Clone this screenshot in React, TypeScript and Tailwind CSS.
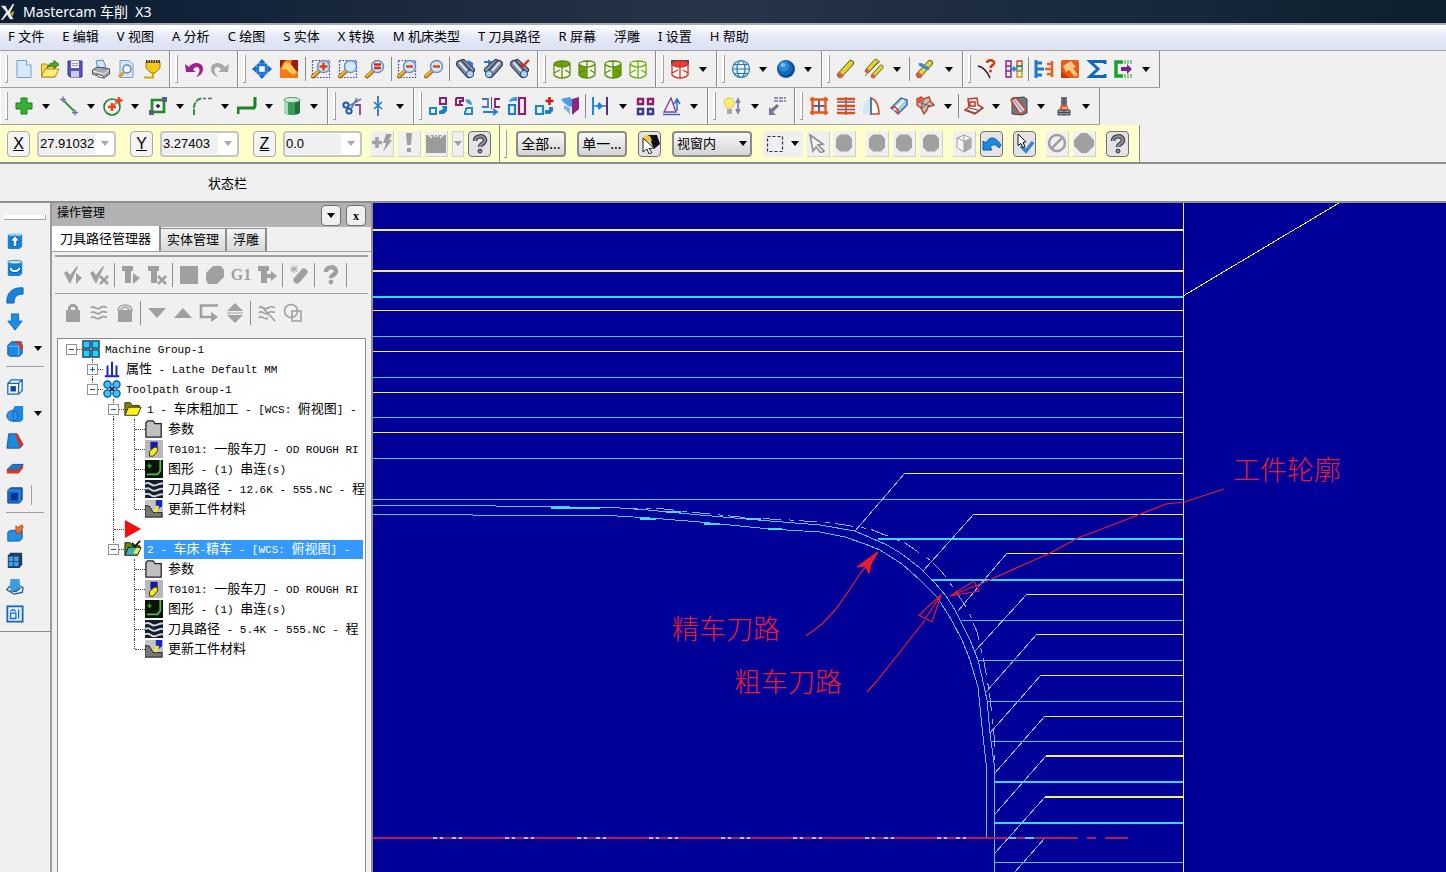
import { Fragment, useState } from "react";
import type { ReactNode } from "react";

const cjk = "font-['Noto_Sans','Noto_Sans_CJK_SC',sans-serif]";

const menus = [
  "F 文件", "E 编辑", "V 视图", "A 分析", "C 绘图", "S 实体", "X 转换",
  "M 机床类型", "T 刀具路径", "R 屏幕", "浮雕", "I 设置", "H 帮助",
];

/* ---------- icon parts ---------- */

const lens = (
  <>
    <path d="M2 17.500l6-5.500" stroke="#8a5a10" strokeWidth="4" strokeLinecap="round" />
    <path d="M2 17l6-5.500" stroke="#f0b030" strokeWidth="2.600" strokeLinecap="round" />
    <circle cx="12.500" cy="7.500" r="6" fill="#cfe9fb" stroke="#6b8fc0" strokeWidth="1.500" />
  </>
);
const marquee = <path d="M1.500 1.500h17v17h-17z" fill="none" stroke="#2a3c9c" strokeWidth="1.200" strokeDasharray="1.500 1.500" />;

const barrels = (
  <>
    <path d="M7 3l9 8" stroke="#2d3348" strokeWidth="6" strokeLinecap="round" />
    <path d="M7 3l9 8" stroke="#8a94ac" strokeWidth="4" strokeLinecap="round" />
    <path d="M4 5l9 10" stroke="#2d3348" strokeWidth="8" strokeLinecap="round" />
    <path d="M4 5l8 9" stroke="#7c86a0" strokeWidth="6" strokeLinecap="round" />
    <path d="M4 4l7 8" stroke="#dfe5f0" strokeWidth="2" strokeLinecap="round" />
    <circle cx="14" cy="15" r="3.600" fill="#a9d6f5" stroke="#2d4870" />
  </>
);

const box = (face: ReactNode, color: string) => (
  <>
    <path d="M2 5c0-4 16-4 16 0v11c0 4-16 4-16 0z" fill="#f6faee" />
    {face}
    <path d="M2 5c0-4 16-4 16 0v11c-2 2-5 3-8 3s-6-1-8-3zM2 5c2 2 5 3 8 3s6-1 8-3M10 8v11M10 2v6M2 14l6-3M18 14l-5-3" fill="none" stroke={color} strokeWidth="1.300" />
  </>
);
const boxTopFace = "M2 5c0-4 16-4 16 0-2 2-5 3-8 3S4 7 2 5z";

const hexagon = <path d="M6 1.500h8l4 4v9l-4 4H6l-4-4v-9z" fill="#a0a0a0" />;

const question = (fill: string, edge: string) => (
  <>
    <path d="M5 7c0-6 10-6 10-1 0 4-5 3.500-5 7" fill="none" stroke={edge} strokeWidth="4.500" />
    <path d="M5 7c0-6 10-6 10-1 0 4-5 3.500-5 7" fill="none" stroke={fill} strokeWidth="2.500" />
    <circle cx="10" cy="17" r="2" fill={fill} stroke={edge} />
  </>
);

const pencil = (
  <>
    <path d="M4 16L15 4" stroke="#6d5c10" strokeWidth="6" strokeLinecap="round" />
    <path d="M4 16L15 4" stroke="#e3d436" strokeWidth="4.200" strokeLinecap="round" />
    <path d="M2.500 14.500l4 3.500" stroke="#e0584a" strokeWidth="4" />
  </>
);

const checkMark = <path d="M1 8l3-2 3 4 7-9 1 1-4 8-4 9z" fill="#a0a0a0" />;
const tee = <path d="M1 1h11v5h-2v12H4V6H1z" fill="#a0a0a0" />;

const blueBlock = (
  <>
    <path d="M2 6l4-4h11l1 3v10l-3 3H4l-2-2z" fill="#1e88e0" stroke="#0a4c94" />
    <path d="M3 7h11v10M14 7l4-4" fill="none" stroke="#7cc4f8" />
  </>
);

const icons: Record<string, ReactNode> = {
  new: (
    <>
      <path d="M3 1.500h9.500L17 6v12.500H3z" fill="#d9ebfb" stroke="#6f9fcb" />
      <path d="M12.500 1.500V6H17" fill="#fff" stroke="#6f9fcb" />
    </>
  ),
  open: (
    <>
      <path d="M1.500 18V5h5l2 2H15v11z" fill="#f6d84a" stroke="#b08c1a" />
      <path d="M1.500 18L5 10h14l-4 8z" fill="#fdeb7c" stroke="#b08c1a" />
      <path d="M7 9c1-4 4-5 7-5V1.500l5 4-5 4V7c-3 0-5 0-7 2z" fill="#55ab2c" stroke="#2f7414" />
    </>
  ),
  save: (
    <>
      <path d="M3 2h14v16H5l-2-2z" fill="#5a57b8" stroke="#35338a" />
      <path d="M6 2h8v7H6z" fill="#f3f3fc" />
      <path d="M6 12h8v6H6z" fill="#c9cde8" />
      <path d="M7 4.500h6M7 6.500h6" stroke="#9a9ad0" />
    </>
  ),
  print: (
    <>
      <path d="M5 2l7-1 3 7-8 2z" fill="#cfe6fb" stroke="#6286ae" />
      <path d="M1.500 11l5-3 12 2v5l-6 4-11-4z" fill="#a8a8ae" stroke="#484850" />
      <path d="M2 12l11 3 5-4" fill="none" stroke="#f2f2f2" />
      <path d="M5 15l7 2 2 2-7-1z" fill="#fff" stroke="#666" />
    </>
  ),
  preview: (
    <>
      <path d="M4 1.500h9L17 5v13.500H4z" fill="#d4e8fa" stroke="#7b9fc6" />
      <circle cx="11" cy="10" r="4" fill="#eef8ff" stroke="#6488b4" strokeWidth="1.500" />
      <path d="M3 18l5-5" stroke="#dba030" strokeWidth="3" />
    </>
  ),
  funnel: (
    <>
      <path d="M4 3h14v6l-5 5h-4L4 9z" fill="#f6c81e" stroke="#a77b00" />
      <path d="M4 2.500h14" stroke="#4c3400" strokeWidth="3" strokeDasharray="1.500 1" />
      <path d="M11 13v5.500H2" fill="none" stroke="#d9a400" strokeWidth="2" />
    </>
  ),
  undo: <path d="M1 5l4 3c4-6 14-5 14 2 0 4-3 7-7 8 4-4 5-9 1-10-2 0-3 1-4 3l3 2H2z" fill="#a0208c" />,
  redo: <path d="M19 5l-4 3C11 2 1 3 1 10c0 4 3 7 7 8-4-4-5-9-1-10 2 0 3 1 4 3l-3 2h10z" fill="#a8a8a8" />,
  fit: (
    <>
      <path d="M10 0l4 4.500H6zM10 20l4-4.500H6zM0 10l4.500-4v8zM20 10l-4.500-4v8z" fill="#1760b8" />
      <path d="M6 6h8v8H6z" fill="#fff" stroke="#1e78d8" strokeWidth="2.500" />
      <path d="M10 3v2M10 15v2M3 10h2M15 10h2" stroke="#1e78d8" strokeWidth="3" />
    </>
  ),
  repaint: (
    <>
      <path d="M1 1h18v18H1z" fill="#a0180a" />
      <path d="M1 19V9l6-8h6l-2 8 8 4v6z" fill="#f47a16" />
      <path d="M5 3l6 1 7 9-4 3-7-6-4 1z" fill="#ffcb58" />
    </>
  ),
  zoomWindow: <>{marquee}{lens}<path d="M12.500 3.500v8M8.500 7.500h8" stroke="#e03c12" strokeWidth="2.500" /></>,
  zoomTarget: <>{marquee}{lens}</>,
  zoomSelected: <>{lens}<path d="M9 5.500h7M9 9h7" stroke="#e02818" strokeWidth="2.500" /></>,
  unzoomWindow: <>{marquee}{lens}<path d="M9 7.500h7" stroke="#e04818" strokeWidth="2.500" /></>,
  unzoom: <>{lens}<path d="M9 7.500h7" stroke="#e04818" strokeWidth="2.500" /></>,
  view1: <>{barrels}<path d="M12 1l5 3v5l-2-3-4-2z" fill="#2c75c8" /></>,
  view2: <><g transform="translate(20 0) scale(-1 1)">{barrels}</g><path d="M1 3h8M6 1v5" stroke="#2c75c8" strokeWidth="2" fill="none" /></>,
  view3: <>{barrels}<path d="M11 4l2 3 6-6" fill="none" stroke="#d42a1a" strokeWidth="2.200" /></>,
  boxTop: box(<path d={boxTopFace} fill="#6fa30c" />, "#5c8c0c"),
  boxFront: box(<path d="M2 5c2 2 5 3 8 3v11c-3 0-6-1-8-3z" fill="#6fa30c" />, "#5c8c0c"),
  boxSide: box(<path d="M10 8c3 0 6-1 8-3v11c-2 2-5 3-8 3z" fill="#6fa30c" />, "#5c8c0c"),
  boxIso: box(null, "#78a818"),
  boxRed: (
    <>
      <path d="M1 1h18v5H1z" fill="#4a4a4a" />
      {box(<path d={boxTopFace} fill="#e8403c" />, "#d4302c")}
    </>
  ),
  globe: (
    <g fill="none" stroke="#1e78b8" strokeWidth="1.200">
      <circle cx="10" cy="10" r="8.500" />
      <ellipse cx="10" cy="10" rx="4" ry="8.500" />
      <path d="M1.500 10h17M3 5.500h14M3 14.500h14" />
    </g>
  ),
  sphere: (
    <>
      <circle cx="10" cy="10" r="9" fill="#0c4c98" />
      <circle cx="9" cy="9" r="7.500" fill="#1868b8" />
      <circle cx="8" cy="7.500" r="5" fill="#2c8cdc" />
      <ellipse cx="7" cy="6" rx="2.500" ry="2" fill="#7cc0f0" />
    </>
  ),
  pencil,
  pencils: <><g transform="translate(0 -1) scale(.8)">{pencil}</g><g transform="translate(6 5) scale(.75)">{pencil}</g><path d="M1 17L16 2" stroke="#756920" /></>,
  pencilBlue: <>{pencil}<path d="M4 6c4-2 6 5 10 3" stroke="#3a86d0" strokeWidth="3.500" fill="none" /></>,
  analyze: (
    <>
      <path d="M1 7c5 1 9 5 12 12" stroke="#222" strokeWidth="1.500" />
      <path d="M10 4c0-4 8-3.500 7 .500-.500 2-3.500 2-3.500 4.500" fill="none" stroke="#c83c10" strokeWidth="2.500" />
      <circle cx="13.500" cy="12" r="1.500" fill="#c83c10" />
    </>
  ),
  distance: (
    <>
      <g fill="none" strokeWidth="1.400">
        <path d="M2 2h5v16H2zM2 7h5M2 12h5" stroke="#7a208c" />
        <path d="M13 2h5v5h-5z" stroke="#d04818" />
        <path d="M13 7h5v5h-5z" stroke="#2a8c48" />
        <path d="M13 12h5v6h-5z" stroke="#c0a020" />
      </g>
      <path d="M7 10l3-3 3 3-3 3z" fill="#2c88d8" />
    </>
  ),
  combs: (
    <>
      <path d="M2 1v18M2 4h6M2 10h8M2 16h6" stroke="#1e78d0" strokeWidth="3" fill="none" />
      <path d="M18 2v16M18 5h-5M18 15h-5M18 10h-7" stroke="#e8601c" strokeWidth="2.600" />
    </>
  ),
  hammer: (
    <>
      <rect x="1" y="1" width="18" height="18" rx="2" fill="#e85a10" />
      <path d="M1 12l9 7H1z" fill="#c03c08" />
      <path d="M3 7l8-5 5 6-3 1 5 7-3 2-6-7-3 2z" fill="#ffc78c" />
    </>
  ),
  sigma: <path d="M18 5V2.500H3l8 7.500-8 7.500h15V15" fill="none" stroke="#1266c0" strokeWidth="3" />,
  green: (
    <>
      <path d="M10 3H3v14h7" fill="none" stroke="#1ca02c" strokeWidth="3.500" />
      <path d="M12 1v4M15 1v4M18 1v4M12 15v4M15 15v4M18 15v4" stroke="#1ca02c" />
      <path d="M8 8h6V5l5 5-5 5v-3H8z" fill="#7a1c90" />
    </>
  ),

  plus: <path d="M7 2h6v5h5v6h-5v5H7v-5H2V7h5z" fill="#35b030" stroke="#1c7c20" />,
  line: (
    <>
      <path d="M5 5l10 10" stroke="#2c9440" strokeWidth="1.800" />
      <path d="M1 3.500h6M4 .500v6M13 16.500h6M16 13.500v6" stroke="#6872a0" strokeWidth="1.400" />
    </>
  ),
  circle: (
    <>
      <circle cx="9" cy="11" r="8" fill="none" stroke="#208038" strokeWidth="1.600" />
      <path d="M9 7v8M5 11h8M16 1v7M12.500 4.500h7" stroke="#e0481c" strokeWidth="2.500" />
      <path d="M10 10l6-6" stroke="#e0481c" strokeWidth="1.400" />
    </>
  ),
  rect: (
    <>
      <path d="M4 4h12v12H4z" fill="none" stroke="#1c8c24" strokeWidth="2.600" />
      <path d="M10 8v4M8 10h4" stroke="#405" strokeWidth="1.500" />
      <path d="M14 1h5v5h-5zM1 14h5v5H1z" fill="#55607a" />
    </>
  ),
  fillet: (
    <>
      <path d="M2 19v-7C2 7 5 3 10 2.500" fill="none" stroke="#2c9440" strokeWidth="2" strokeDasharray="6 1" />
      <path d="M11 2.500h3M16 2.500h4" stroke="#5c6480" strokeWidth="1.600" />
    </>
  ),
  spline: <path d="M1 18v-6h16l1-2V1" fill="none" stroke="#1c8028" strokeWidth="3" />,
  cylinder: (
    <>
      <path d="M2 4v12c0 4 16 4 16 0V4z" fill="#3c9c60" />
      <path d="M2 4v12c0 1 2 2 4 2.500V5z" fill="#a6dcb8" />
      <path d="M13 5v13.500c3 0 5-1 5-2.500V4z" fill="#1f7040" />
      <ellipse cx="10" cy="4" rx="8" ry="2.500" fill="#d2eed9" stroke="#4c9c68" />
    </>
  ),
  trim: (
    <>
      <circle cx="4" cy="9" r="2.600" fill="none" stroke="#1e5cb0" strokeWidth="2" />
      <circle cx="7" cy="15" r="2.600" fill="none" stroke="#1e5cb0" strokeWidth="2" />
      <path d="M7 10l12-7M9 13l6-11" stroke="#5a7cb0" strokeWidth="1.600" />
      <path d="M13 9h5v10" fill="none" stroke="#904088" strokeWidth="1.800" />
    </>
  ),
  breakPoint: (
    <>
      <path d="M10 0v6M10 14v6" stroke="#3858b0" strokeWidth="1.600" />
      <path d="M6 6l8 7M14 6l-8 7M10 5v10" stroke="#1e78c8" strokeWidth="1.600" />
    </>
  ),
  translate: (
    <>
      <path d="M12 2h6v6h-6z" fill="none" stroke="#8c1c6c" strokeWidth="2" />
      <path d="M2 12h6v6H2z" fill="none" stroke="#1c88c8" strokeWidth="2" />
      <path d="M11 18h5l3-3v-5h-5l1 3-4 2z" fill="#1c80d0" />
    </>
  ),
  rotate: (
    <>
      <path d="M2 2h7v3H6v4h3M2 2v7h4" fill="none" stroke="#8c1c6c" strokeWidth="2" />
      <path d="M12 12h6v6h-7v-3M12 12v3" fill="none" stroke="#1c88c8" strokeWidth="2" />
      <path d="M11 4c4-2 7 1 7 5l-4-1z" fill="#4c98d8" />
    </>
  ),
  mirror: (
    <>
      <path d="M1 3h6v8H1" fill="none" stroke="#4870b8" strokeWidth="1.800" />
      <path d="M19 3h-5v8h5" fill="none" stroke="#8c1c6c" strokeWidth="1.800" />
      <path d="M10.500 1v12" stroke="#555" />
      <path d="M2 16h13m-3-3l4 3-4 3" fill="none" stroke="#1c80d0" strokeWidth="1.800" />
    </>
  ),
  scale: (
    <>
      <path d="M2 9h6v9H2z" fill="none" stroke="#1c80c0" strokeWidth="2.200" />
      <path d="M12 2h6v16h-6z" fill="none" stroke="#8c1c6c" strokeWidth="2.200" />
      <path d="M2 6c1-4 4-5 8-5v4H6z" fill="#3c98dc" />
    </>
  ),
  offset: (
    <>
      <path d="M2 10h7v8H2z" fill="none" stroke="#1c88c8" strokeWidth="2.200" />
      <path d="M11 18h5l3-3v-4h-4v3h-4z" fill="#1c80d0" />
      <path d="M15.500 1v8M11.500 5h8" stroke="#d41818" strokeWidth="2.500" />
    </>
  ),
  project: (
    <>
      <path d="M1 3l9-2 3 4v5l-3 1-6-4z" fill="#48a0e0" />
      <path d="M12 3l7-2v12l-7 6z" fill="#8c2480" />
      <path d="M4 9l6 3v7c-2-3-4-5-6-6z" fill="#78b8e8" />
    </>
  ),
  span: (
    <>
      <path d="M3 1v18" stroke="#1c88d8" strokeWidth="2" />
      <path d="M17 1v18" stroke="#5c3070" strokeWidth="2" />
      <path d="M4 10h12" stroke="#1c80d0" strokeWidth="1.500" />
      <path d="M9 6l4 4-4 4-2-4z" fill="#1c80d0" />
    </>
  ),
  array: (
    <g fill="none" strokeWidth="2.400">
      <path d="M3 3h5v5H3zM13 3h5v5h-5z" stroke="#8c1c6c" />
      <path d="M13 13h5v5h-5zM3 13h5v5H3z" stroke="#3c3888" />
    </g>
  ),
  triangle: (
    <>
      <path d="M2 16h12L9 2z" fill="none" stroke="#8c3c98" strokeWidth="1.400" />
      <path d="M1 18.500h17M15 15V4m-3 4l3-5 3 5" fill="none" stroke="#2c70c0" strokeWidth="1.500" />
    </>
  ),
  bulb: (
    <>
      <path d="M7 2c7 0 6 7 3 10H5C1 8 1 2 7 2z" fill="#fbee78" stroke="#d8c84c" />
      <path d="M5 13h5v5H5z" fill="#a8a8b0" />
      <path d="M16 4v12m-2-9l2-4 2 4m-4 6l2 4 2-4" fill="none" stroke="#7c78a8" strokeWidth="1.600" />
    </>
  ),
  attributes: (
    <>
      <path d="M7 2h12M7 5h12" stroke="#74749c" strokeWidth="1.300" strokeDasharray="4 1" />
      <path d="M2 19v-8l2 2 6-5 2 2-6 6 3 3z" fill="#787498" />
    </>
  ),
  grid: (
    <>
      <path d="M10 3v14M3 10h14" stroke="#6c5c88" strokeWidth="2" />
      <path d="M1 3.500h18M1 16.500h18M3.500 1v18M16.500 1v18" stroke="#e8581c" strokeWidth="2.400" />
    </>
  ),
  ruled: (
    <>
      <path d="M10 1v18M1 6h18M1 13.500h18" stroke="#705c78" strokeWidth="1.400" />
      <path d="M1 3h18M1 10h18M1 17h18" stroke="#e04c18" strokeWidth="2.600" />
    </>
  ),
  revolve: (
    <>
      <path d="M1 18C1 8 4 3 9 2v16z" fill="#cfe8f4" />
      <path d="M9 2v16h8c0-8-3-14-8-16z" fill="#fff" stroke="#d04828" strokeWidth="1.600" />
      <path d="M9 1v18" stroke="#2c80b8" strokeWidth="1.500" />
    </>
  ),
  sweep: (
    <>
      <path d="M2 12L12 2l6 2v5l-9 9-4-4z" fill="#9ed0ec" stroke="#3c6888" strokeWidth="1.400" />
      <path d="M5 14L15 4" stroke="#fff" strokeWidth="2" />
      <path d="M2 12l4-1 3 3v4" fill="none" stroke="#e04020" strokeWidth="1.600" />
    </>
  ),
  net: (
    <>
      <path d="M2 3l4-2 3 2 5-2 2 5 3 3-6 2-1 3-3 4-3-6-4-3z" fill="#d8b8ac" stroke="#b84428" strokeWidth="1.400" />
      <path d="M3 6l12 4M9 3l-3 9M15 5L6 13" stroke="#5c5870" />
      <circle cx="5" cy="4" r="2.500" fill="#e85828" />
    </>
  ),
  surface: (
    <>
      <path d="M4 3l9-1 1 7 5 3-8 6-10-4 4-3z" fill="#f4ece8" stroke="#b83c28" strokeWidth="1.500" />
      <path d="M6 6h5v4H6z" fill="none" stroke="#b83c28" strokeWidth="1.500" />
      <path d="M3 14l8 3 7-5M5 12l9 2" fill="none" stroke="#555" />
    </>
  ),
  surface2: (
    <>
      <path d="M3 2l12-1 3 2v14l-5 2-10-1z" fill="#77757c" stroke="#454448" />
      <path d="M2 4l5-2 10 12-6 4z" fill="#e4d8dc" stroke="#c8442c" strokeWidth="1.400" />
      <path d="M5 4l9 12" stroke="#8ca4c8" strokeWidth="1.500" />
    </>
  ),
  tower: (
    <>
      <path d="M7 1h6v8H7z" fill="#66727c" />
      <path d="M7 9h6l2 6H5z" fill="#e8542c" />
      <path d="M4 14h12v5H4zM4 16.500h12M10 14v5M10 1v8" fill="#8c98a0" stroke="#444c54" />
      <path d="M8 12h5" stroke="#fff" />
    </>
  ),

  bolt: (
    <>
      <path d="M5 4v11M0 9.500h10" stroke="#a0a0a0" strokeWidth="3.600" />
      <path d="M14 1h6l-3 6h3l-9 12 3-9h-3z" fill="#a0a0a0" />
    </>
  ),
  exclaim: <path d="M7 0h6l-1 12H8zM8 15h4v4H8z" fill="#a0a0a0" />,
  block: (
    <>
      <path d="M0 2h20v18H0z" fill="#9c9c9c" />
      <path d="M2 1l4 4M18 1l-4 4M8 2l1 2M12 2l-1 2" stroke="#f0f0f0" strokeWidth="1.500" />
    </>
  ),
  help: question("#8c8c98", "#34343c"),
  pick: (
    <>
      <path d="M8 1h9l3 9-6 5z" fill="#111" />
      <path d="M1 8l4-7 5 1 2 5z" fill="#f8c838" />
      <path d="M3 4l11 10-5 .500 3 4-3 1.500-2-5-4 3z" fill="#fff" stroke="#222" />
    </>
  ),
  dashed: <path d="M2.500 2.500h15v15h-15z" fill="none" stroke="#303048" strokeWidth="1.200" strokeDasharray="3 2" />,
  cursor: <path d="M2 2l13 9-5 1 6 6-3 2-5-6-3 4z" fill="#f4f4f4" stroke="#8c8c8c" strokeWidth="1.600" />,
  hexagon,
  disc: <path d="M7 0h6l7 7v6l-7 7H7l-7-7V7z" fill="#a0a0a0" />,
  solidGrey: (
    <>
      <path d="M3 5l7-3 7 3v10l-7 4-7-4z" fill="#f4f4f4" stroke="#a0a0a0" />
      <path d="M10 8l7-3v10l-7 4z" fill="#a8a8a8" />
      <path d="M3 5l7 3v11M10 2v6" fill="none" stroke="#a0a0a0" />
    </>
  ),
  back: <path d="M1 16V7l3 2c4-7 9-7 15 2l-2 3c-3-4-6-4-9-1l2 3z" fill="#1c88e0" stroke="#0c58a8" />,
  validate: (
    <>
      <path d="M6 12l5 5 7-9" fill="none" stroke="#3c80d0" strokeWidth="3.500" />
      <path d="M3 0l8 8-3 .500 2 4-2 1-2-4-3 2z" fill="#fff" stroke="#111" />
    </>
  ),
  forbid: (
    <g fill="none" stroke="#a0a0a0">
      <circle cx="10" cy="10" r="8" strokeWidth="2.500" />
      <path d="M5 15L15 5" strokeWidth="2.500" />
    </g>
  ),

  checkAdd: <>{checkMark}<path d="M13 8l6 5-6 6z" fill="#a0a0a0" /></>,
  checkDel: <>{checkMark}<path d="M11 11l8 8M19 11l-8 8" stroke="#a0a0a0" strokeWidth="2.500" /></>,
  teeAdd: <>{tee}<path d="M12 8l7 5-7 6z" fill="#a0a0a0" /></>,
  teeDel: <>{tee}<path d="M11 11l8 8M19 11l-8 8" stroke="#a0a0a0" strokeWidth="2.500" /></>,
  square: <path d="M1 1h18v18H1z" fill="#a0a0a0" />,
  blob: <path d="M8 1h8l3 4v7l-7 7H3l-2-4V8z" fill="#a0a0a0" />,
  teeArrow: <>{tee}<path d="M9 9h5V6l6 5-6 5v-3H9z" fill="#a0a0a0" /></>,
  drill: (
    <>
      <path d="M8 15l7-8" stroke="#a0a0a0" strokeWidth="7" strokeLinecap="round" />
      <path d="M2 1l6 6M8 1L2 7M5 0v8M1 4h8" stroke="#a0a0a0" />
    </>
  ),
  helpGrey: question("#a0a0a0", "#a0a0a0"),
  lock: <path d="M5 7V4l3-3h4l3 3v3h2v12H3V7zM8 7h4V4H8z" fill="#a0a0a0" fillRule="evenodd" />,
  waves: <path d="M2 5c3-4 5 3 9 0s5 0 7-1M2 10c3-4 5 3 9 0s5 0 7-1M2 15c3-4 5 3 9 0s5 0 7-1" fill="none" stroke="#a0a0a0" strokeWidth="1.800" />,
  lockAll: (
    <>
      <path d="M3 7h14v12H3z" fill="#a0a0a0" />
      <path d="M3 8c0-8 14-8 14 0M6 8c0-5 8-5 8 0" fill="none" stroke="#a0a0a0" strokeWidth="1.600" />
    </>
  ),
  down: <path d="M1 5h18l-9 10z" fill="#a0a0a0" />,
  up: <path d="M1 15h18L10 5z" fill="#a0a0a0" />,
  insert: (
    <>
      <path d="M19 2.500H2V14h11" fill="none" stroke="#a0a0a0" strokeWidth="2.600" />
      <path d="M12 9l7 5-7 5z" fill="#a0a0a0" />
    </>
  ),
  upDown: <path d="M2 8l8-8 8 8zM2 12h16l-8 8zM2 9.500h16v1H2z" fill="#a0a0a0" />,
  wavesOff: <path d="M2 5c3-4 5 3 9 0s5 0 7-1M2 10c3-4 5 3 9 0s5 0 7-1M2 15c3-4 5 3 9 0M4 3l14 15" fill="none" stroke="#a0a0a0" strokeWidth="1.600" />,
  ghost: (
    <g fill="none" stroke="#a0a0a0" strokeWidth="1.600">
      <circle cx="8" cy="8" r="6.500" />
      <path d="M9 8h9v10H9z" />
    </g>
  ),

  extrude: (
    <>
      <path d="M2 3h16v13l-3 3H3l-1-2z" fill="#1582dc" />
      <ellipse cx="10" cy="3" rx="8" ry="1.500" fill="#8ad0f8" />
      <path d="M10 4l5 6h-3v6H8v-6H5z" fill="#fff" stroke="#0a4c94" />
    </>
  ),
  solidRevolve: (
    <>
      <path d="M2 3h16v13l-3 3H3l-1-2z" fill="#1582dc" />
      <ellipse cx="10" cy="3.500" rx="8" ry="2" fill="#bfe6fb" stroke="#2c78b8" />
      <path d="M5 10c1 5 9 4 10 0" fill="none" stroke="#0a4c94" strokeWidth="4" />
      <path d="M5 10c1 5 9 4 10 0" fill="none" stroke="#fff" strokeWidth="2.200" />
    </>
  ),
  solidSweep: <path d="M1 19C0 8 7 1 19 2v7c-7 0-10 3-10 10z" fill="#1582dc" stroke="#0c62b4" />,
  loft: <path d="M6 1h8v8h4l-8 10L2 9h4z" fill="#1e8ce4" stroke="#1268b4" />,
  solidFillet: <>{blueBlock}<path d="M11 1c6 0 8 5 8 9l-3 1c0-4-2-7-6-8z" fill="#e0341c" /></>,
  shell: (
    <>
      <path d="M2 6l4-4h12v12l-4 4H2zM2 6h12v12M14 6l4-4" fill="#eaf5fd" stroke="#1868b0" strokeWidth="1.400" />
      <path d="M5 9h6v6H5z" fill="#104c94" />
    </>
  ),
  boolean: (
    <>
      <path d="M10 1h9v15l-3 3h-8V4z" fill="#1e88e0" />
      <circle cx="7" cy="12" r="6" fill="#2c94e8" stroke="#0c58a8" />
      <path d="M8 6v12" stroke="#0c58a8" />
    </>
  ),
  draft: (
    <>
      <path d="M3 2h9l7 12-4 4H1z" fill="#1e88e0" stroke="#0c58a8" />
      <path d="M10 1l3 1 6 12-3 4z" fill="#dc3018" />
    </>
  ),
  trimSolid: (
    <>
      <path d="M1 12l6-6h12l-5 6z" fill="#1e78d0" stroke="#0c4890" />
      <path d="M1 12h13l5-6v4l-5 6H1z" fill="#e0341c" />
    </>
  ),
  thicken: (
    <>
      <path d="M2 5l3-3h13v13l-3 4H2z" fill="#1670cc" stroke="#0a3c7c" />
      <path d="M5 8h8v8H5z" fill="#0a2c98" />
      <path d="M2 5h13v13" fill="none" stroke="#3c90e0" />
    </>
  ),
  removeFace: (
    <>
      <path d="M2 9l3-2h13v9l-3 3H2z" fill="#2490e8" stroke="#0c58a8" />
      <path d="M18 1l-5 3-2-2v8h7l-2-2 3-4z" fill="#f07828" stroke="#b8400c" />
    </>
  ),
  windowSolid: (
    <>
      <path d="M2 5l3-3h13v13l-3 4H2z" fill="#223c5c" />
      <path d="M3 6h5v5H3zM9 6h5v5H9zM3 12h5v5H3zM9 12h5v5H9z" fill="#3ca0ec" />
    </>
  ),
  findFeature: (
    <>
      <path d="M5 1h10l1 11-6 3-6-3z" fill="#3c9ce4" />
      <path d="M4 9l-3 4 8 5 9-2 1-5-3-2M5 14l6 1 5-4" fill="none" stroke="#1e5890" strokeWidth="1.400" />
    </>
  ),
  layout: (
    <>
      <rect x="1.500" y="1.500" width="17" height="17" fill="#dff0fc" stroke="#1868b8" strokeWidth="2" />
      <path d="M5 9h6v6H5zM14 5v10M5 7l3-2 3 2" fill="none" stroke="#1868b8" strokeWidth="1.400" />
    </>
  ),

  machine: <path d="M1 1h8v8H1zM11 1h8v8h-8zM1 11h8v8H1zM11 11h8v8h-8z" fill="#20d0f8" stroke="#10305c" strokeWidth="1.400" />,
  bars: <path d="M2 18h16M5 6v12M10 2v16M15 6v12" stroke="#1828c0" strokeWidth="2.200" fill="none" />,
  group: (
    <>
      <path d="M5 5l10 10M15 5L5 15" stroke="#10305c" strokeWidth="2" />
      <g fill="#30c8f8" stroke="#10488c" strokeWidth="1.400">
        <circle cx="5" cy="5" r="4" /><circle cx="15" cy="5" r="4" /><circle cx="5" cy="15" r="4" /><circle cx="15" cy="15" r="4" />
      </g>
    </>
  ),
  folder: (
    <>
      <path d="M1 17V3h6l2 3h8v4" fill="#8c7c08" stroke="#2c2800" />
      <path d="M1 17l4-9h14l-4 9z" fill="#fbf020" stroke="#2c2800" />
    </>
  ),
  folderSel: (
    <>
      <path d="M1 17V3h6l2 3h8v4" fill="#6c8428" stroke="#181800" />
      <path d="M1 17l4-9h14l-4 9z" fill="#38b0b8" stroke="#181800" />
      <path d="M10 15l4-6h4l-3 6z" fill="#f8f048" />
      <path d="M9 3l3 4 6-6" fill="none" stroke="#181800" strokeWidth="2" />
    </>
  ),
  params: <path d="M1 19V3l2-2h6l2 3h7v15z" fill="#c0c0c0" stroke="#202020" strokeWidth="1.400" />,
  tool: (
    <>
      <path d="M0 0h20v20H0z" fill="#b8b8b8" />
      <path d="M6 2h8v8l-4 3-4-3z" fill="#1018b0" />
      <path d="M5 18v-5l5-5h4v4l-5 6z" fill="#f8e820" stroke="#303000" />
    </>
  ),
  geometry: (
    <>
      <path d="M0 0h20v20H0z" fill="#081408" />
      <path d="M17 0v12l-3 4H2" fill="none" stroke="#58b848" strokeWidth="2" />
      <path d="M5 4v5M2.500 6.500h5" stroke="#38a838" strokeWidth="1.600" />
    </>
  ),
  toolpath: (
    <>
      <path d="M0 0h20v20H0z" fill="#181c24" />
      <path d="M0 4c6-3 6 3 11 2s5-3 9-2M0 10c6-3 6 3 11 2s5-3 9-2M0 16c6-3 6 3 11 2s5-3 9-2" fill="none" stroke="#c8d8e4" strokeWidth="2.200" />
    </>
  ),
  stock: (
    <>
      <path d="M0 0h20v20H0z" fill="#c4c4c4" />
      <path d="M0 6l5 1 4 7h10v5H0z" fill="#787878" stroke="#181818" />
      <path d="M12 0h7v7l-4 3-3-2z" fill="#1828c0" />
      <path d="M12 6l4 1-3 7-3-1z" fill="#f8e820" />
    </>
  ),
  play: <path d="M1 0l18 10L1 20z" fill="#f01010" />,
};

function Icon({ name, className = "size-5" }: { name: string; className?: string }) {
  return (
    <svg viewBox="0 0 20 20" className={`${className} shrink-0`} fill="none" aria-hidden="true">
      {icons[name]}
    </svg>
  );
}

function Caret({ className = "text-black" }: { className?: string }) {
  return (
    <svg viewBox="0 0 8 5" className={`w-2 h-[5px] shrink-0 ${className}`} aria-hidden="true">
      <path d="M0 0h8L4 5z" fill="currentColor" />
    </svg>
  );
}

/* "|" is a separator, "v" a drop-down arrow, anything else an icon button */
function Items({ items }: { items: string[] }) {
  return (
    <>
      {items.map((item, i) => {
        if (item === "|") return <span key={i} className="w-px h-6 bg-[#8a8a8a]" />;
        if (item === "v") {
          return (
            <button key={i} className="w-4 h-6 flex items-center justify-center" aria-label={`${items[i - 1]} options`}>
              <Caret />
            </button>
          );
        }
        return (
          <button key={i} className="w-6 h-6 flex items-center justify-center hover:bg-white" aria-label={item}>
            <Icon name={item} />
          </button>
        );
      })}
    </>
  );
}

function Grip() {
  return <span className="w-[3px] h-7 mx-1 shrink-0 bg-white border-r border-b border-[#a0a0a0]" />;
}

function Group({ width, items }: { width: string; items: string[] }) {
  return (
    <div className={`${width} h-9 flex items-center border-r border-r-[#8c8c8c] border-l border-l-white shrink-0`}>
      <Grip />
      <div className="flex-1 flex items-center justify-between pr-[5px]">
        <Items items={items} />
      </div>
    </div>
  );
}

const rowOne = [
  { width: "w-[170px]", items: ["new", "open", "save", "print", "preview", "funnel"] },
  { width: "w-[68px]", items: ["undo", "redo"] },
  { width: "w-[300px]", items: ["fit", "repaint", "|", "zoomWindow", "zoomTarget", "zoomSelected", "|", "unzoomWindow", "unzoom", "|", "view1", "view2", "view3"] },
  { width: "w-[118px]", items: ["boxTop", "boxFront", "boxSide", "boxIso"] },
  { width: "w-[61px]", items: ["boxRed", "v"] },
  { width: "w-[105px]", items: ["globe", "v", "sphere", "v"] },
  { width: "w-[141px]", items: ["pencil", "pencils", "v", "|", "pencilBlue", "v"] },
  { width: "w-[197px]", items: ["analyze", "distance", "|", "combs", "hammer", "sigma", "green", "v"] },
];

const rowTwo = [
  { width: "w-[328px]", items: ["plus", "v", "line", "v", "circle", "v", "rect", "v", "fillet", "v", "spline", "v", "cylinder", "v"] },
  { width: "w-[86px]", items: ["trim", "breakPoint", "v"] },
  { width: "w-[294px]", items: ["translate", "rotate", "mirror", "scale", "offset", "project", "|", "span", "v", "array", "triangle", "v"] },
  { width: "w-[87px]", items: ["bulb", "v", "attributes"] },
  { width: "w-[305px]", items: ["grid", "ruled", "revolve", "sweep", "net", "v", "|", "surface", "v", "surface2", "v", "tower", "v"] },
];

function Coordinate({ axis, initial }: { axis: string; initial: string }) {
  const [value, setValue] = useState(initial);
  return (
    <div className="flex items-center gap-[7px]">
      <button className="w-[23px] h-[26px] rounded-sm border border-[#a8a8a8] bg-[#f4f4f4] font-['Liberation_Sans',sans-serif] text-base leading-none underline">
        {axis}
      </button>
      <div className="w-[79px] h-[26px] flex items-center border-2 border-[#c4c4c4] rounded-sm bg-white">
        <input
          aria-label={`${axis} coordinate`}
          value={value}
          onChange={(e) => setValue(e.target.value)}
          className="w-14 h-5 pl-px bg-[#f0f0f0] font-['Liberation_Sans',sans-serif] text-[13px] outline-none"
        />
        <button className="flex-1 flex justify-center" aria-label={`${axis} history`}>
          <Caret className="text-[#a8a8a8]" />
        </button>
      </div>
    </div>
  );
}

function FlatButton({ name, raised = false }: { name: string; raised?: boolean }) {
  return (
    <button
      aria-label={name}
      className={`w-[23px] h-[26px] flex items-center justify-center ${
        raised ? "rounded-sm border border-[#70707c] bg-[#e4e4e4]" : "bg-[#f0f0f0] border-r border-b border-[#d0d0d0]"
      }`}
    >
      <Icon name={name} />
    </button>
  );
}

function TextButton({ children }: { children: ReactNode }) {
  return (
    <button className="w-[50px] h-[26px] rounded-sm border-2 border-[#8c8c8c] bg-linear-to-b from-[#f8f8f8] to-[#d4d4d4] text-sm leading-none whitespace-nowrap">
      {children}
    </button>
  );
}

function CoordinateBar() {
  return (
    <div className="flex border-b-2 border-[#8c8c8c] h-[39px]">
      <div className="flex items-center bg-[#ffffcc] border-r border-[#8c8c8c] shrink-0">
        <div className="w-[500px] h-full flex items-center pl-[7px] border-r border-[#8c8c8c]">
          <div className="flex gap-[14px]">
            <Coordinate axis="X" initial="27.91032" />
            <Coordinate axis="Y" initial="3.27403" />
            <Coordinate axis="Z" initial="0.0" />
          </div>
          <div className="flex gap-1 ml-[9px]">
            <FlatButton name="bolt" />
            <FlatButton name="exclaim" />
            <FlatButton name="block" />
            <button className="w-3 h-[26px] flex items-center justify-center bg-[#f0f0f0] border border-[#d0d0d0]" aria-label="block options">
              <Caret className="text-[#a0a0a0]" />
            </button>
            <FlatButton name="help" raised />
          </div>
        </div>
        <Grip />
        <div className="flex items-center gap-[11px] ml-[5px]">
          <TextButton>全部...</TextButton>
          <TextButton>单一...</TextButton>
          <FlatButton name="pick" raised />
          <div className="relative">
            <select
              aria-label="选择方式"
              className="w-20 h-[26px] pl-[3px] rounded-sm border-2 border-[#8c8c8c] bg-linear-to-b from-[#f8f8f8] to-[#d4d4d4] text-[13px] leading-none appearance-none"
            >
              <option>视窗内</option>
            </select>
            <span className="absolute right-[5px] top-[11px] pointer-events-none">
              <Caret />
            </span>
          </div>
          <div className="flex bg-[#f0f0f0] h-[26px] items-center">
            <Items items={["dashed", "v"]} />
          </div>
        </div>
        <div className="flex items-center gap-[10px] ml-1 pr-[10px]">
          <div className="flex gap-[3px]">
            <FlatButton name="cursor" />
            <FlatButton name="hexagon" />
          </div>
          <div className="flex gap-1">
            <FlatButton name="hexagon" />
            <FlatButton name="hexagon" />
            <FlatButton name="hexagon" />
          </div>
          <div className="flex gap-1">
            <FlatButton name="solidGrey" />
            <FlatButton name="back" raised />
          </div>
          <FlatButton name="validate" raised />
          <div className="flex gap-1">
            <FlatButton name="forbid" />
            <FlatButton name="disc" />
          </div>
          <FlatButton name="help" raised />
        </div>
      </div>
    </div>
  );
}

/* ---------- solids toolbar on the left edge ---------- */

const solids = [
  "extrude", "solidRevolve", "solidSweep", "loft", "solidFillet+", "-",
  "shell", "boolean+", "draft", "trimSolid", "thicken", "-",
  "removeFace", "windowSolid", "findFeature", "layout",
];

function SolidsBar() {
  return (
    <aside className="w-[52px] shrink-0 border-r-2 border-[#9a9a9a]">
      <div className="border-b border-[#8c8c8c] pt-3 pb-1">
        <div className="h-[5px] ml-1 mr-1 mb-[7px] bg-white border-b border-r border-[#a0a0a0]" />
        {solids.map((item, i) => {
          if (item === "-") return <div key={i} className="h-px mt-1 mb-[6px] mx-[6px] bg-[#a0a0a0]" />;
          const name = item.replace("+", "");
          return (
            <div key={i} className="flex items-center h-[27px] pl-[6px]">
              <button aria-label={name}>
                <Icon name={name} className="size-[18px]" />
              </button>
              {item.endsWith("+") && (
                <button className="ml-[10px]" aria-label={`${name} options`}>
                  <Caret />
                </button>
              )}
              {name === "thicken" && <span className="ml-[7px] w-px h-5 bg-[#a0a0a0]" />}
            </div>
          );
        })}
      </div>
    </aside>
  );
}

/* ---------- operations tree ---------- */

type Row = { level: number; icon: string; text: string; box?: string; selected?: boolean };

const tree: Row[] = [
  { level: 0, icon: "machine", text: "Machine Group-1", box: "-" },
  { level: 1, icon: "bars", text: "属性 - Lathe Default MM", box: "+" },
  { level: 1, icon: "group", text: "Toolpath Group-1", box: "-" },
  { level: 2, icon: "folder", text: "1 - 车床粗加工 - [WCS: 俯视图] -", box: "-" },
  { level: 3, icon: "params", text: "参数" },
  { level: 3, icon: "tool", text: "T0101: 一般车刀 - OD ROUGH RI" },
  { level: 3, icon: "geometry", text: "图形 - (1) 串连(s)" },
  { level: 3, icon: "toolpath", text: "刀具路径 - 12.6K - 555.NC - 程" },
  { level: 3, icon: "stock", text: "更新工件材料" },
  { level: 2, icon: "play", text: "" },
  { level: 2, icon: "folderSel", text: "2 - 车床-精车 - [WCS: 俯视图] -", box: "-", selected: true },
  { level: 3, icon: "params", text: "参数" },
  { level: 3, icon: "tool", text: "T0101: 一般车刀 - OD ROUGH RI" },
  { level: 3, icon: "geometry", text: "图形 - (1) 串连(s)" },
  { level: 3, icon: "toolpath", text: "刀具路径 - 5.4K - 555.NC - 程" },
  { level: 3, icon: "stock", text: "更新工件材料" },
];

/* Latin runs are set smaller so that two of them span one Chinese character */
function TreeText({ text }: { text: string }) {
  return (
    <>
      {text.split(/([\u4e00-\u9fff]+)/).map((part, i) =>
        i % 2 ? <Fragment key={i}>{part}</Fragment> : <span key={i} className="text-[11px]">{part}</span>
      )}
    </>
  );
}

function TreeRow({ row, index }: { row: Row; index: number }) {
  // a guide runs down column n while a later row still hangs off it
  const guide = (column: number) => {
    const rest = tree.slice(index + 1);
    const end = rest.findIndex((r) => r.level < column);
    const scope = end < 0 ? rest : rest.slice(0, end);
    return scope.some((r) => r.level === column);
  };
  return (
    <li className="flex items-center h-5">
      {[0, 1, 2, 3].slice(0, row.level + 1).map((column) => {
        const own = column === row.level;
        return (
          <span key={column} className="w-[21px] h-5 shrink-0 flex flex-col items-center relative">
            {column > 0 && (own || guide(column)) && (
              <span className={`border-l border-dotted border-[#404040] ${guide(column) ? "h-5" : "h-[10px]"}`} />
            )}
            {own && <span className="absolute left-[11px] top-[10px] w-[10px] border-t border-dotted border-[#404040]" />}
            {own && row.box && (
              <button className="absolute left-[5px] top-[5px] size-[11px] bg-white border border-[#909090]" aria-label={row.box === "-" ? "collapse" : "expand"}>
                <svg viewBox="0 0 9 9" className="block size-[9px]">
                  <path d={row.box === "-" ? "M2 4.500h5" : "M2 4.500h5M4.500 2v5"} stroke="#3050a0" />
                </svg>
              </button>
            )}
          </span>
        );
      })}
      <Icon name={row.icon} className="size-[18px]" />
      <span
        className={`ml-[2px] pl-[3px] h-[19px] leading-[19px] text-[13px] whitespace-pre ${
          row.selected ? "flex-1 bg-[#3399ff] text-white mr-[2px]" : ""
        }`}
      >
        <TreeText text={row.text} />
      </span>
    </li>
  );
}

const panelTabs = ["刀具路径管理器", "实体管理", "浮雕"];
const panelRowOne = ["checkAdd", "checkDel", "|", "teeAdd", "teeDel", "|", "square", "blob", "G1", "teeArrow", "|", "drill", "|", "helpGrey", "|"];
const panelRowTwo = ["lock", "waves", "lockAll", "|", "down", "up", "insert", "upDown", "|", "wavesOff", "ghost"];

function PanelTools({ items }: { items: string[] }) {
  return (
    <div className="flex items-center h-9 pl-[5px]">
      {items.map((item, i) =>
        item === "|" ? (
          <span key={i} className="w-px h-6 ml-[2px] mr-[3px] bg-[#8c8c8c]" />
        ) : (
          <button key={i} aria-label={item} className="w-[26px] h-6 flex items-center justify-center">
            {item === "G1" ? (
              <span className="font-['Liberation_Serif',serif] font-bold text-base text-[#a0a0a0]">G1</span>
            ) : (
              <Icon name={item} />
            )}
          </button>
        )
      )}
    </div>
  );
}

function OperationsPanel() {
  const [tab, setTab] = useState(0);
  return (
    <section className="w-[321px] shrink-0 flex flex-col border-r-2 border-[#909090]">
      <header className="h-6 shrink-0 bg-[#b2b2b2] flex items-start px-[5px] gap-[5px]">
        <h2 className="flex-1 text-xs leading-5">操作管理</h2>
        <button className="mt-[2px] w-5 h-[21px] flex items-center justify-center rounded-sm border border-[#707070] bg-[#f0f0f0]" aria-label="panel menu">
          <Caret />
        </button>
        <button className="mt-[2px] w-5 h-[21px] rounded-sm border border-[#707070] bg-[#f0f0f0] font-['Liberation_Serif',serif] text-xs font-bold leading-none" aria-label="close">
          x
        </button>
      </header>
      <div className="flex items-end h-[25px] shrink-0 border-b border-[#a0a0a0] text-[13px]">
        {panelTabs.map((label, i) => (
          <button
            key={label}
            onClick={() => setTab(i)}
            className={`border-r-2 border-[#8c8c8c] whitespace-nowrap ${
              i === tab ? "h-[25px] bg-white px-2" : "h-[23px] border-t px-[6px] bg-linear-to-b from-[#f4f4f4] to-[#d8d8d8]"
            }`}
          >
            {label}
          </button>
        ))}
      </div>
      <div className="mx-[3px] mt-[3px] border-t-2 border-[#a0a0a0]">
        <PanelTools items={panelRowOne} />
        <div className="border-t border-[#a0a0a0] pt-px">
          <PanelTools items={panelRowTwo} />
        </div>
      </div>
      <div className="mt-[7px] ml-[5px] mr-[5px] flex-1 bg-white border border-b-0 border-[#8c8c8c] overflow-hidden">
        <ul className="pl-[3px] font-['Liberation_Mono','Noto_Sans_CJK_SC',monospace]">
          {tree.map((row, i) => (
            <TreeRow key={i} row={row} index={i} />
          ))}
        </ul>
      </div>
    </section>
  );
}

/* ---------- drawing area ---------- */

const YELLOW = "#f4ec70";
const CYAN = "#48c8f8";

// [y, start x, thickness]
const feedLines: [number, number, number][] = [
  [229, 373, 2], [270, 373, 2], [310, 373, 1], [351, 373, 1], [392, 373, 1], [432, 373, 1],
  [473, 905, 1], [514, 974, 1], [553, 1007, 1], [594, 1027, 1], [634, 1037, 1], [675, 1041, 1],
  [716, 1045, 1], [755, 1046, 2], [796, 1045, 2],
];
const cutLines: [number, number, number][] = [
  [296, 373, 2], [336, 373, 1], [377, 373, 1], [417, 373, 1], [458, 373, 1], [499, 373, 1],
  [538, 878, 2], [579, 931, 2], [620, 962, 1], [660, 979, 1], [701, 987, 1], [741, 991, 1],
  [781, 995, 2], [822, 995, 2], [862, 995, 1],
];
const retracts = [
  [905, 473, 855, 531], [974, 514, 923, 571], [1007, 553, 958, 611], [1027, 594, 975, 651],
  [1037, 634, 986, 692], [1041, 675, 990, 733], [1045, 716, 995, 773], [1046, 756, 995, 814],
  [1045, 797, 995, 853], [1045, 838, 1014, 873],
];
const centreDashes = [433, 505, 577, 649, 721, 793, 865, 937];

function Drawing() {
  return (
    <main className="flex-1 min-w-0 relative bg-[#000099] overflow-hidden">
      <svg viewBox="373 203 1073 669" preserveAspectRatio="xMinYMin slice" className="absolute inset-0 w-full h-full" fill="none">
        <g shapeRendering="crispEdges">
          {feedLines.map(([y, x, h]) => (
            <rect key={y} x={x} y={y} width={1183 - x} height={h} fill={YELLOW} />
          ))}
          {cutLines.map(([y, x, h]) => (
            <rect key={y} x={x} y={y} width={1183 - x} height={h} fill={h === 2 ? "#30dcfc" : CYAN} />
          ))}
          <rect x="1183" y="203" width="1" height="669" fill={YELLOW} />
          <path d="M1183 296L1339 203" stroke={YELLOW} />
          {retracts.map(([x1, y1, x2, y2]) => (
            <line key={y1} x1={x1} y1={y1} x2={x2} y2={y2} stroke="#90b8f4" />
          ))}
          {/* roughing and finishing profiles */}
          <path d="M373 505L420 505 570 507 620 508 648 510 700 515 770 521 820 525 855 531 887 545 902 554 920 568 935 583 946 596 955 610 970 640 978 660 982 677 987 700 990 733 994 763 994 872" stroke={CYAN} />
          <path d="M373 514L473 515 600 515 650 518 700 522 770 529 820 532 845 537 865 544 880 550 902 564 920 580 937 597 951 619 962 640 970 660 978 687 982 727 986 763 986 838" stroke={CYAN} />
          <path d="M551 508H600M666 512h15M746 519h15M640 519h16M704 524h16M768 529h14" stroke="#38e4f8" strokeWidth="2" />
          <path d="M620 508L655 508 700 513 750 518 790 520 832 523 870 529 905 543 930 560 942 572 955 590 968 610 977 632 984 662 989 690 992 715 994 735 994 765" stroke="#a8a0f0" strokeDasharray="18 8 5 5" />
          {/* spindle centre line */}
          <rect x="373" y="837" width="705" height="2" fill="#b81c48" />
          <rect x="1087" y="837" width="9" height="2" fill="#b81c48" />
          <rect x="1105" y="837" width="23" height="2" fill="#b81c48" />
          {centreDashes.map((x) => (
            <path key={x} d={`M${x} 838h4m3 0h3m9 0h4m3 0h3`} stroke="#c0b4f0" strokeWidth="2" />
          ))}
          <path d="M1008 838h8M1025 838h9" stroke="#58c8f8" strokeWidth="2" />
        </g>
        <g stroke="#e81c30" strokeWidth="1.200">
          <path d="M806 636L822 624 836 609 850 589 862 571 870 562" />
          <path d="M878 552L857 567 865 566 869 573 871 564z" fill="#e81c30" />
          <path d="M867 692L876 682 900 652 925 620" />
          <path d="M941 595L919 615 932 622zM941 595L925 619" />
          <path d="M1224 489L1184 502 1166 504 1138 515 1120 522 1078 538 1050 553 985 582 950 596" />
          <path d="M950 596L974 581 979 591z" />
        </g>
        <g fill="#e81c30" className="font-['Noto_Sans_CJK_SC',sans-serif] text-[27px] font-light">
          <text x="1233" y="480">工件轮廓</text>
          <text x="672" y="639">精车刀路</text>
          <text x="734" y="692">粗车刀路</text>
        </g>
      </svg>
    </main>
  );
}

export default function App() {
  return (
    <div className={`${cjk} h-screen min-h-[640px] flex flex-col overflow-hidden bg-[#f0f0f0] text-black`}>
      <header className="h-[25px] shrink-0 flex items-center bg-linear-to-r from-[#0c1c30] via-[#263548] to-[#0c2030] border-b-2 border-[#a8acb0] text-white">
        <svg viewBox="0 0 20 20" className="size-[18px] shrink-0" fill="none" aria-hidden="true">
          <path d="M1 3h5l3 6 5-8h2l-5 10 4 7h-4l-3-5-5 6H1l6-9z" fill="#e8e8e8" />
          <path d="M11 11l5-2-2 6z" fill="#c0a838" />
        </svg>
        <h1 className="ml-[5px] text-sm leading-none whitespace-pre">Mastercam 车削  X3</h1>
      </header>

      <nav className="h-[26px] shrink-0 flex items-center gap-[18px] pl-2 pb-px bg-linear-to-b from-white via-[#e4e8f6] to-[#dce2f4] border-b border-[#a0a0a0] text-[13px] whitespace-nowrap">
        {menus.map((menu) => (
          <button key={menu}>{menu}</button>
        ))}
      </nav>

      <div className="shrink-0">
        {[rowOne, rowTwo].map((row, i) => (
          <div key={i} className="flex">
            <div className="flex border-b border-[#a0a0a0]">
              {row.map((group) => (
                <Group key={group.width} {...group} />
              ))}
            </div>
          </div>
        ))}
        <CoordinateBar />
      </div>

      <div className="h-[39px] shrink-0 flex items-center pl-52 pt-[2px] border-b-2 border-[#909090] text-[13px]">状态栏</div>

      <div className="flex-1 min-h-0 flex">
        <SolidsBar />
        <OperationsPanel />
        <Drawing />
      </div>
    </div>
  );
}
